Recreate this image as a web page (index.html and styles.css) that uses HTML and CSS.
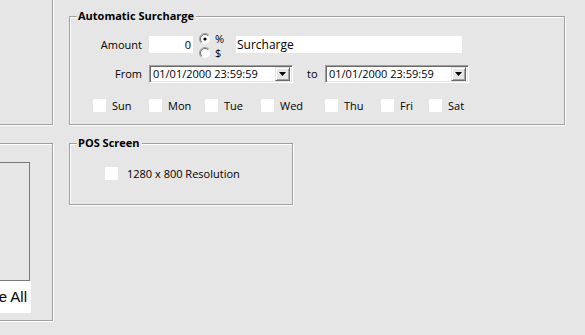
FILE: index.html
```html
<!DOCTYPE html>
<html>
<head>
<meta charset="utf-8">
<link rel="stylesheet" href="styles.css">
</head>
<body>
<div class="page">
  <div class="left-col">
    <div class="group left-top"></div>
    <div class="group left-bottom">
      <div class="listbox"></div>
      <div class="btn"><span>Remove All</span></div>
    </div>
  </div>
  <div class="right-col">
    <div class="group surcharge">
      <div class="legend">Automatic Surcharge</div>
      <div class="row row-amount">
        <div class="lbl">Amount</div>
        <div class="field num">0</div>
        <div class="radios">
          <div class="radio-item">
            <svg class="radio" width="12" height="12" viewBox="0 0 12 12"><circle cx="6" cy="6" r="5" fill="#fff"/><path d="M2.1 9.9 A5.5 5.5 0 0 1 9.9 2.1" fill="none" stroke="#a0a0a0" stroke-width="1"/><path d="M2.8 9.2 A4.5 4.5 0 0 1 9.2 2.8" fill="none" stroke="#696969" stroke-width="1"/><circle cx="6" cy="6" r="1.6" fill="#000"/></svg>
            <span class="rtxt">%</span>
          </div>
          <div class="radio-item">
            <svg class="radio" width="12" height="12" viewBox="0 0 12 12"><circle cx="6" cy="6" r="5" fill="#fff"/><path d="M2.1 9.9 A5.5 5.5 0 0 1 9.9 2.1" fill="none" stroke="#a0a0a0" stroke-width="1"/><path d="M2.8 9.2 A4.5 4.5 0 0 1 9.2 2.8" fill="none" stroke="#696969" stroke-width="1"/></svg>
            <span class="rtxt">$</span>
          </div>
        </div>
        <div class="field name">Surcharge</div>
      </div>
      <div class="row row-date">
        <div class="lbl">From</div>
        <div class="combo"><span>01/01/2000 23:59:59</span><div class="drop"><svg width="7" height="4" viewBox="0 0 7 4"><path d="M0 0 H7 L3.5 4 Z" fill="#000"/></svg></div></div>
        <div class="to">to</div>
        <div class="combo"><span>01/01/2000 23:59:59</span><div class="drop"><svg width="7" height="4" viewBox="0 0 7 4"><path d="M0 0 H7 L3.5 4 Z" fill="#000"/></svg></div></div>
      </div>
      <div class="days">
        <div class="chk-item"><span class="box"></span><span>Sun</span></div>
        <div class="chk-item"><span class="box"></span><span>Mon</span></div>
        <div class="chk-item"><span class="box"></span><span>Tue</span></div>
        <div class="chk-item"><span class="box"></span><span>Wed</span></div>
        <div class="chk-item"><span class="box"></span><span>Thu</span></div>
        <div class="chk-item"><span class="box"></span><span>Fri</span></div>
        <div class="chk-item"><span class="box"></span><span>Sat</span></div>
      </div>
    </div>
    <div class="group pos">
      <div class="legend">POS Screen</div>
      <div class="chk-item res"><span class="box"></span><span>1280 x 800 Resolution</span></div>
    </div>
  </div>
</div>
</body>
</html>
```
FILE: styles.css
```css
html, body {
  margin: 0;
  padding: 0;
  background: #e6e6e6;
  overflow: hidden;
}
body {
  width: 585px;
  height: 335px;
  font-family: "Open Sans", "Noto Sans", sans-serif;
  font-size: 11px;
  color: #000;
}
.page {
  display: flex;
  align-items: flex-start;
}
.group {
  box-sizing: border-box;
  border: 1px solid #a0a0a0;
  box-shadow: inset 1px 1px 0 #fff, 1px 1px 0 #fff;
  position: relative;
}
.legend {
  position: absolute;
  top: -8px;
  left: 7px;
  padding: 0 2px 0 1px;
  background: #e6e6e6;
  font-weight: bold;
  line-height: 14px;
}
.left-col {
  width: 100px;
  margin-left: -47px;
  margin-top: -20px;
  display: flex;
  flex-direction: column;
  gap: 18px;
}
.left-top {
  height: 145px;
}
.left-bottom {
  height: 178px;
  padding-top: 18px;
}
.listbox {
  box-sizing: border-box;
  width: 76px;
  height: 119px;
  border: 1px solid #7a7a7a;
}
.btn {
  box-sizing: border-box;
  width: 77px;
  height: 32px;
  background: #fff;
  font-family: "Liberation Sans", Arial, sans-serif;
  font-size: 15px;
  line-height: 32px;
  display: flex;
  justify-content: flex-end;
  padding-right: 4px;
  white-space: nowrap;
}
.btn span {
  flex: none;
}
.right-col {
  margin-left: 16px;
  margin-top: 16px;
  display: flex;
  flex-direction: column;
  gap: 18px;
}
.surcharge {
  width: 496px;
  height: 109px;
  padding-top: 16px;
}
.row {
  display: flex;
}
.row-amount {
  height: 25px;
}
.lbl {
  width: 72px;
  margin-right: 7px;
  text-align: right;
  line-height: 17px;
}
.row-amount .lbl {
  margin-top: 3px;
}
.field {
  box-sizing: border-box;
  height: 17px;
  background: #fff;
  line-height: 17px;
}
.num {
  width: 44px;
  margin-top: 3px;
  text-align: right;
  padding-right: 2px;
}
.radios {
  width: 37px;
  margin-left: 6px;
  display: flex;
  flex-direction: column;
  gap: 2px;
}
.radio-item {
  display: flex;
  align-items: center;
  height: 12px;
  gap: 4px;
}
.radio {
  flex: none;
}
.rtxt {
  font-size: 11px;
  line-height: 12px;
  font-weight: normal;
}
.name {
  width: 226px;
  margin-top: 3px;
  font-size: 12px;
  padding-left: 1px;
}
.row-date {
  margin-top: 7px;
  height: 18px;
}
.row-date .lbl {
  line-height: 18px;
}
.combo {
  box-sizing: border-box;
  width: 144px;
  height: 18px;
  background: #fff;
  border: 1px solid;
  border-color: #a0a0a0 #fff #fff #a0a0a0;
  box-shadow: inset 1px 1px 0 #696969, inset -1px -1px 0 #e3e3e3;
  display: flex;
  align-items: center;
  justify-content: space-between;
  padding: 0 2px 0 3px;
  line-height: 16px;
}
.drop {
  box-sizing: border-box;
  width: 15px;
  height: 14px;
  background: #e6e6e6;
  border: 1px solid;
  border-color: #e3e3e3 #696969 #696969 #e3e3e3;
  box-shadow: inset 1px 1px 0 #fff, inset -1px -1px 0 #a0a0a0;
  display: flex;
  align-items: center;
  justify-content: center;
}
.to {
  width: 32px;
  box-sizing: border-box;
  padding-left: 14px;
  line-height: 18px;
}
.days {
  margin-top: 16px;
  padding-left: 23px;
  display: grid;
  grid-template-columns: 56px 56px 56px 64px 56px 48px auto;
}
.chk-item {
  display: flex;
  align-items: center;
  height: 13px;
}
.box {
  width: 13px;
  height: 13px;
  background: #fff;
  flex: none;
}
.days .box {
  margin-right: 6px;
}
.pos {
  width: 224px;
  height: 62px;
  padding-top: 23px;
  padding-left: 35px;
}
.res .box {
  margin-right: 9px;
}
```
